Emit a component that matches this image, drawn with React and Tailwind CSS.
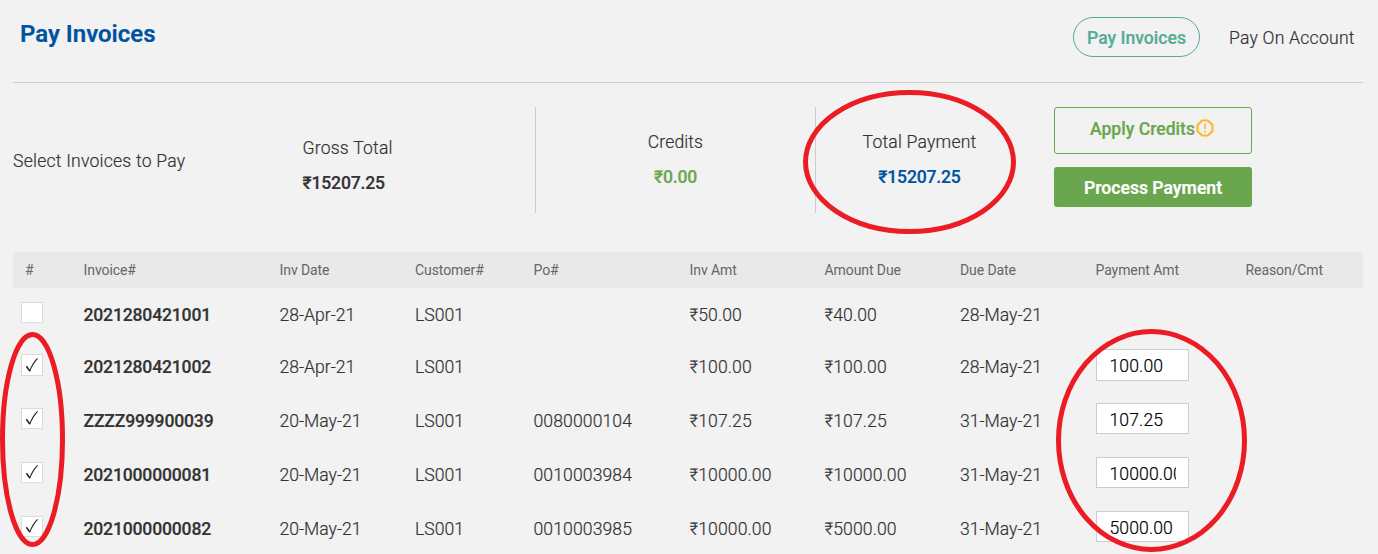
const COLS =
  "grid grid-cols-[70.5px_196px_135.5px_118.5px_156px_135px_135.5px_135.5px_150px_1fr]";

const headers = [
  "#",
  "Invoice#",
  "Inv Date",
  "Customer#",
  "Po#",
  "Inv Amt",
  "Amount Due",
  "Due Date",
  "Payment Amt",
  "Reason/Cmt",
];

const invoices = [
  { id: "2021280421001", date: "28-Apr-21", customer: "LS001", po: "", amount: "₹50.00", due: "₹40.00", dueDate: "28-May-21", payment: null },
  { id: "2021280421002", date: "28-Apr-21", customer: "LS001", po: "", amount: "₹100.00", due: "₹100.00", dueDate: "28-May-21", payment: "100.00" },
  { id: "ZZZZ999900039", date: "20-May-21", customer: "LS001", po: "0080000104", amount: "₹107.25", due: "₹107.25", dueDate: "31-May-21", payment: "107.25" },
  { id: "2021000000081", date: "20-May-21", customer: "LS001", po: "0010003984", amount: "₹10000.00", due: "₹10000.00", dueDate: "31-May-21", payment: "10000.00" },
  { id: "2021000000082", date: "20-May-21", customer: "LS001", po: "0010003985", amount: "₹10000.00", due: "₹5000.00", dueDate: "31-May-21", payment: "5000.00" },
];

function CheckBox({ checked, tall }) {
  return (
    <span
      className={`flex w-[22px] items-center justify-center border border-[#dcdcdc] bg-white ${tall ? "h-[22px]" : "h-[21px]"}`}
    >
      {checked && (
        <svg className="mb-px" width="14" height="16" viewBox="0 0 14 16" fill="none" stroke="#222">
          <path d="M1.4 9.3 L4.8 14" strokeWidth="1.5" />
          <path d="M4.6 14.4 C6.6 9.2 9 5 12.6 1.4" strokeWidth="1.1" />
        </svg>
      )}
    </span>
  );
}

function InvoiceRow({ invoice, first, tall }) {
  const checked = invoice.payment !== null;
  return (
    <div className={`${COLS} ${first ? "h-[52px]" : "h-[54px]"} pt-[14px]`}>
      <div className="pl-2">
        <CheckBox checked={checked} tall={tall} />
      </div>
      <div className="pt-px font-medium tracking-[-0.19px]">{invoice.id}</div>
      <div className="pt-px">{invoice.date}</div>
      <div className="pt-px">{invoice.customer}</div>
      <div className="pt-px tracking-[0.1px]">{invoice.po}</div>
      <div className="pt-px tracking-[0.1px]">{invoice.amount}</div>
      <div className="pt-px tracking-[0.1px]">{invoice.due}</div>
      <div className="pt-px">{invoice.dueDate}</div>
      <div>
        {checked && (
          <input
            readOnly
            value={invoice.payment}
            className={`-mt-[5px] block w-[93px] border border-[#ccc] bg-white pt-0.5 pr-3 pl-[13px] tracking-[0.1px] text-black outline-none ${tall ? "h-8" : "h-[31px]"}`}
          />
        )}
      </div>
      <div />
    </div>
  );
}

export default function App() {
  return (
    <div className="relative h-[554px] w-[1378px] overflow-hidden bg-[#f2f2f2] pr-[15px] pl-[13px] font-['Roboto',sans-serif] text-[17.6px] leading-6 font-light text-[#333] [-webkit-text-stroke:0.2px]">
      <header className="flex h-[83px] items-start border-b border-[#ccc]">
        <h1 className="mt-[18px] ml-[7px] text-2xl leading-8 font-semibold text-[#00529f]">Pay Invoices</h1>
        <nav className="mt-[17px] ml-auto flex items-center">
          <button className="flex h-10 w-[127px] items-center justify-center rounded-[20px] border border-[#55ab96] pt-0.5 font-medium text-[#55ab96]">
            Pay Invoices
          </button>
          <span className="mr-2 ml-[29px] w-[126px] pt-px tracking-[0.22px] whitespace-nowrap">Pay On Account</span>
        </nav>
      </header>

      <section className="flex h-[169px] pt-6">
        <div className="w-[289.5px] pt-[42px] tracking-[0.22px]">Select Invoices to Pay</div>
        <div className="w-[232.5px] pt-[29px]">
          <div className="tracking-[0.2px]">Gross Total</div>
          <div className="mt-[11px] font-medium tracking-[-0.19px]">₹15207.25</div>
        </div>
        <div className="h-[106px] w-[280px] border-l border-[#ccc] pt-[23px] text-center">
          <div className="tracking-[0.1px]">Credits</div>
          <div className="mt-[11px] font-medium tracking-[-0.19px] text-[#6aa64e]">₹0.00</div>
        </div>
        <div className="h-[106px] w-[208px] border-l border-[#ccc] pt-[23px] text-center">
          <div className="tracking-[0.2px]">Total Payment</div>
          <div className="mt-[11px] font-medium tracking-[-0.19px] text-[#00529f]">₹15207.25</div>
        </div>
        <div className="ml-[31px] flex w-[198px] flex-col gap-[13px] font-medium">
          <button className="flex h-[47px] items-center justify-center rounded-[3px] border border-[#6aa64e] pr-0.5 pb-[3px] text-[#6aa64e]">
            Apply Credits
            <svg className="mb-0.5 ml-px" width="18" height="18" viewBox="0 0 18 18" fill="none">
              <path
                d="M6 1.5 h6 l4.5 4.5 v6 L12 16.5 H6 L1.5 12 V6 Z"
                stroke="#fbb72f"
                strokeWidth="2.2"
                strokeLinejoin="round"
              />
              <path d="M9 4.5 v5.8 M9 11.8 v1.8" stroke="#fbb72f" strokeWidth="1.5" />
            </svg>
          </button>
          <button className="h-10 rounded-[3px] bg-[#6aa64e] pt-0.5 font-semibold text-white">Process Payment</button>
        </div>
      </section>

      <section className="w-[1350px]">
        <div className={`${COLS} h-9 items-center bg-[#e9e9e9] text-sm font-normal tracking-[-0.08px] text-[#666] [-webkit-text-stroke:0px]`}>
          {headers.map((h) => (
            <div key={h} className={h === "#" ? "pl-3" : ""}>
              {h}
            </div>
          ))}
        </div>
        {invoices.map((invoice, i) => (
          <InvoiceRow key={invoice.id} invoice={invoice} first={i === 0} tall={i === 1} />
        ))}
      </section>

      <svg
        className="pointer-events-none absolute inset-0"
        width="1378"
        height="554"
        viewBox="0 0 1378 554"
        fill="none"
        stroke="#ec1c24"
        strokeWidth="5"
      >
        <ellipse cx="909.5" cy="162" rx="104" ry="69.5" />
        <ellipse cx="32.5" cy="439.5" rx="30" ry="105" />
        <ellipse cx="1151.5" cy="440.5" rx="93" ry="109" />
      </svg>
    </div>
  );
}
